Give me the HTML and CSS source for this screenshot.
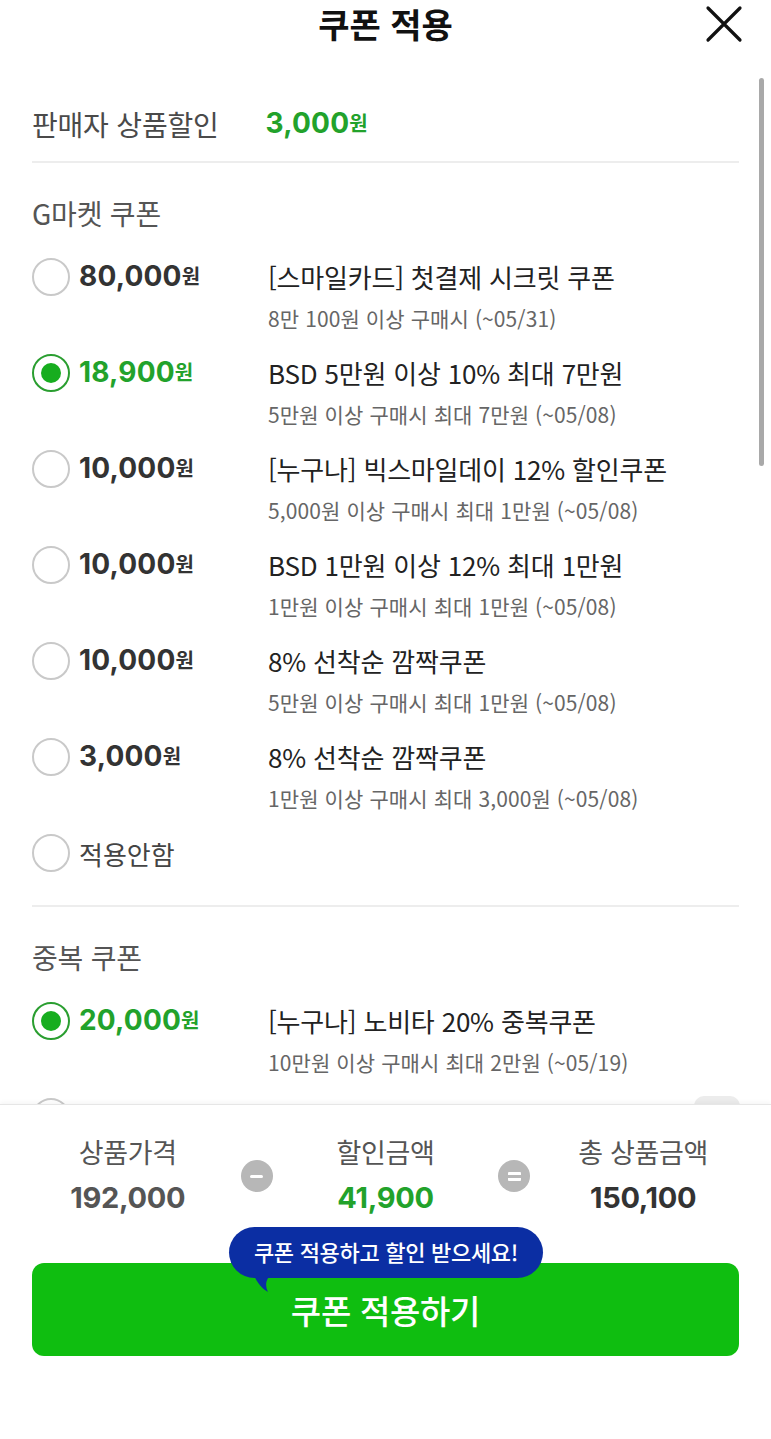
FILE: index.html
```html
<!DOCTYPE html>
<html lang="ko">
<head>
<meta charset="utf-8">
<title>쿠폰 적용</title>
<link rel="stylesheet" href="styles.css">
</head>
<body>
<div class="sheet">
  <header class="hdr">
    <span></span>
    <h1 class="hdr-title">쿠폰 적용</h1>
    <button class="close" aria-label="닫기">
      <svg width="38" height="38" viewBox="0 0 38 38"><path d="M3 3 L35 35 M35 3 L3 35" stroke="#111" stroke-width="3.2" stroke-linecap="round" fill="none"/></svg>
    </button>
  </header>

  <div class="scroll">
    <div class="content">
      <div class="seller">
        <span class="seller-label">판매자 상품할인</span>
        <span class="amt amt-green seller-amt">3,000<em>원</em></span>
      </div>
      <div class="divider"></div>

      <section class="sec">
        <h2 class="sec-title">G마켓 쿠폰</h2>
        <div class="row">
          <div class="row-left"><span class="radio"></span><span class="amt">80,000<em>원</em></span></div>
          <div class="row-right"><div class="c-title">[스마일카드] 첫결제 시크릿 쿠폰</div><div class="c-sub">8만 100원 이상 구매시 (~05/31)</div></div>
        </div>
        <div class="row">
          <div class="row-left"><span class="radio on"></span><span class="amt amt-green">18,900<em>원</em></span></div>
          <div class="row-right"><div class="c-title">BSD 5만원 이상 10% 최대 7만원</div><div class="c-sub">5만원 이상 구매시 최대 7만원 (~05/08)</div></div>
        </div>
        <div class="row">
          <div class="row-left"><span class="radio"></span><span class="amt">10,000<em>원</em></span></div>
          <div class="row-right"><div class="c-title">[누구나] 빅스마일데이 12% 할인쿠폰</div><div class="c-sub">5,000원 이상 구매시 최대 1만원 (~05/08)</div></div>
        </div>
        <div class="row">
          <div class="row-left"><span class="radio"></span><span class="amt">10,000<em>원</em></span></div>
          <div class="row-right"><div class="c-title">BSD 1만원 이상 12% 최대 1만원</div><div class="c-sub">1만원 이상 구매시 최대 1만원 (~05/08)</div></div>
        </div>
        <div class="row">
          <div class="row-left"><span class="radio"></span><span class="amt">10,000<em>원</em></span></div>
          <div class="row-right"><div class="c-title">8% 선착순 깜짝쿠폰</div><div class="c-sub">5만원 이상 구매시 최대 1만원 (~05/08)</div></div>
        </div>
        <div class="row">
          <div class="row-left"><span class="radio"></span><span class="amt">3,000<em>원</em></span></div>
          <div class="row-right"><div class="c-title">8% 선착순 깜짝쿠폰</div><div class="c-sub">1만원 이상 구매시 최대 3,000원 (~05/08)</div></div>
        </div>
        <div class="row-none">
          <span class="radio"></span><span class="none-label">적용안함</span>
        </div>
      </section>
      <div class="divider"></div>

      <section class="sec">
        <h2 class="sec-title">중복 쿠폰</h2>
        <div class="row">
          <div class="row-left"><span class="radio on"></span><span class="amt amt-green">20,000<em>원</em></span></div>
          <div class="row-right"><div class="c-title">[누구나] 노비타 20% 중복쿠폰</div><div class="c-sub">10만원 이상 구매시 최대 2만원 (~05/19)</div></div>
        </div>
        <div class="row">
          <div class="row-left"><span class="radio"></span></div>
        </div>
      </section>
    </div>
    <div class="scrollbar"></div>
    <div class="top-pill"></div>
  </div>

  <footer class="foot">
    <div class="summary">
      <div class="s-label c1">상품가격</div>
      <div class="op c2"><span class="op-minus"></span></div>
      <div class="s-label c3">할인금액</div>
      <div class="op c4"><span class="op-eq"></span></div>
      <div class="s-label c5">총 상품금액</div>
      <div class="s-val c1 s-gray">192,000</div>
      <div class="s-val c3 s-green">41,900</div>
      <div class="s-val c5 s-dark">150,100</div>
    </div>
    <div class="cta-wrap">
      <button class="cta">쿠폰 적용하기</button>
      <div class="tip">
        쿠폰 적용하고 할인 받으세요!
        <svg class="tip-tail" width="26" height="20" viewBox="0 0 26 20"><path d="M0 0 C3 8 8 15 15 19 C12 13 12 6 20 0 Z" fill="#0b2ea3"/></svg>
      </div>
    </div>
  </footer>
</div>
</body>
</html>
```

FILE: styles.css
```css
* { box-sizing: border-box; }
html, body { margin: 0; padding: 0; background: #fff; }
body {
  font-family: "Noto Sans CJK KR", "Noto Sans", sans-serif;
  color: #222;
}
.sheet {
  width: 771px;
  height: 1439px;
  display: flex;
  flex-direction: column;
  overflow: hidden;
  background: #fff;
}

/* header */
.hdr {
  height: 50px;
  display: grid;
  grid-template-columns: 1fr auto 1fr;
  align-items: start;
  padding: 3px 28px 0 28px;
}
.hdr-title {
  margin: 0;
  font-size: 34px;
  font-weight: 700;
  line-height: 42px;
  color: #111;
  letter-spacing: 0;
}
.close {
  justify-self: end;
  margin-top: 2px;
  width: 38px;
  height: 38px;
  padding: 0;
  border: 0;
  background: none;
  display: block;
}
.close svg { display: block; }

/* scroll area */
.scroll {
  position: relative;
  height: 1054px;
  overflow: hidden;
  flex: none;
}
.content { padding: 37px 32px 0 32px; }
.scrollbar {
  position: absolute;
  right: 7px;
  top: 28px;
  width: 5px;
  height: 388px;
  border-radius: 3px;
  background: #a9a9a9;
}
.top-pill {
  position: absolute;
  right: 31px;
  bottom: -30px;
  width: 46px;
  height: 38px;
  border-radius: 10px;
  background: #ececec;
}

.seller {
  height: 74px;
  display: flex;
  align-items: center;
  gap: 47px;
}
.seller-label {
  font-size: 28px;
  color: #4a4a4a;
  letter-spacing: -0.2px;
}
.seller-amt { font-size: 27px; }

.divider { height: 2px; background: #ededed; }

.sec { padding-top: 30px; }
.sec-title {
  margin: 0 0 25px 0;
  font-size: 28px;
  font-weight: 400;
  line-height: 40px;
  color: #555;
  letter-spacing: -0.2px;
}

.amt {
  font-family: Inter, "Noto Sans CJK KR", sans-serif;
  font-weight: 700;
  font-size: 28px;
  color: #333;
  letter-spacing: 0.2px;
  line-height: 38px;
}
.amt em {
  font-style: normal;
  font-family: "Noto Sans CJK KR", sans-serif;
  font-size: 20px;
  font-weight: 700;
  margin-left: 0;
  letter-spacing: 0;
  position: relative;
  top: -2px;
}
.amt-green { color: #22a22b; }

.row {
  display: grid;
  grid-template-columns: 236px 1fr;
  padding-bottom: 23px;
}
.row-left {
  display: flex;
  align-items: center;
  gap: 9px;
  height: 38px;
}
.radio {
  flex: none;
  width: 38px;
  height: 38px;
  border-radius: 50%;
  border: 2px solid #c9c9c9;
  background: #fff;
  display: flex;
  align-items: center;
  justify-content: center;
}
.radio.on { border-color: #2a9e30; }
.radio.on::after {
  content: "";
  width: 20px;
  height: 20px;
  border-radius: 50%;
  background: #17ad1f;
}
.c-title {
  font-size: 26px;
  line-height: 38px;
  color: #222;
  white-space: nowrap;
  letter-spacing: -0.2px;
}
.c-sub {
  margin-top: 9px;
  font-size: 21px;
  line-height: 26px;
  color: #666;
  white-space: nowrap;
  letter-spacing: 0.1px;
}

.row-none {
  display: flex;
  align-items: center;
  gap: 9px;
  height: 38px;
  margin-bottom: 33px;
}
.none-label { font-size: 26px; color: #444; }

/* footer */
.foot {
  flex: 1;
  border-top: 1px solid #e6e6e6;
  box-shadow: 0 -2px 4px rgba(0,0,0,0.04);
  padding-top: 29px;
  background: #fff;
  position: relative;
}
.summary {
  display: grid;
  grid-template-columns: 1fr 32px 1fr 32px 1fr;
  grid-template-rows: 36px 40px;
  row-gap: 8px;
  padding: 0 15px;
  text-align: center;
}
.c1 { grid-column: 1; }
.c2 { grid-column: 2; }
.c3 { grid-column: 3; }
.c4 { grid-column: 4; }
.c5 { grid-column: 5; }
.s-label {
  grid-row: 1;
  font-size: 27px;
  line-height: 36px;
  color: #555;
  letter-spacing: -0.3px;
  white-space: nowrap;
}
.op {
  grid-row: 1 / 3;
  align-self: center;
  width: 32px;
  height: 32px;
  border-radius: 50%;
  background: #b7b7b7;
  display: flex;
  flex-direction: column;
  align-items: center;
  justify-content: center;
}
.op-minus { display: block; width: 13px; height: 3px; border-radius: 2px; background: #fff; }
.op-eq {
  display: block; width: 13px; height: 9px;
  border-top: 3px solid #fff; border-bottom: 3px solid #fff; border-radius: 1px;
}
.s-val {
  grid-row: 2;
  font-family: Inter, "Noto Sans CJK KR", sans-serif;
  font-weight: 700;
  font-size: 29px;
  line-height: 40px;
  letter-spacing: -0.3px;
}
.s-gray { color: #555; }
.s-green { color: #22a22b; }
.s-dark { color: #333; }

.cta-wrap {
  position: relative;
  margin: 45px 32px 0 32px;
}
.cta {
  display: block;
  width: 100%;
  height: 93px;
  border: 0;
  border-radius: 12px;
  background: #0fbe10;
  color: #fff;
  font-family: "Noto Sans CJK KR", sans-serif;
  font-size: 33px;
  font-weight: 500;
  letter-spacing: -0.3px;
  padding: 0;
}
.tip {
  position: absolute;
  left: 197px;
  top: -36px;
  width: 314px;
  height: 51px;
  border-radius: 26px;
  background: #0b2ea3;
  color: #fff;
  font-size: 22px;
  font-weight: 500;
  line-height: 49px;
  text-align: center;
  letter-spacing: -0.3px;
  white-space: nowrap;
}
.tip-tail {
  position: absolute;
  left: 24px;
  top: 46px;
}
```
